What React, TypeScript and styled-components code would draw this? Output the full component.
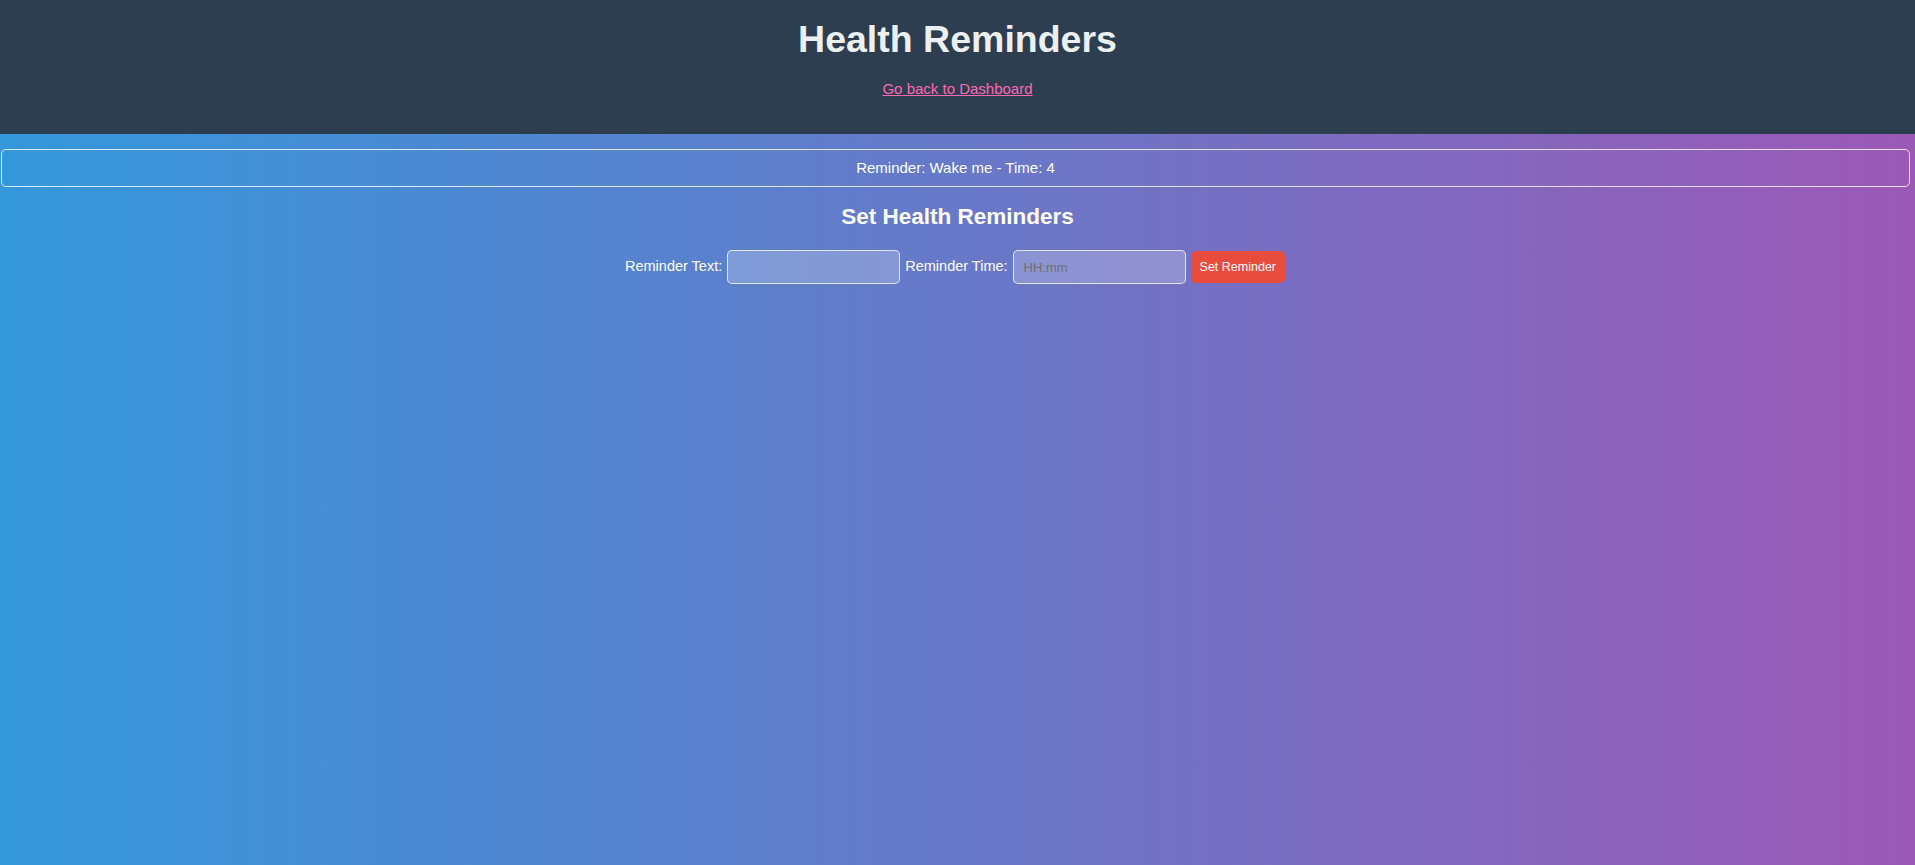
import React, { useState } from "react";
import styled, { createGlobalStyle } from "styled-components";

const GlobalStyle = createGlobalStyle`
  html, body {
    margin: 0;
    padding: 0;
  }

  body {
    min-height: 100vh;
    font-family: "Liberation Sans", Arial, sans-serif;
    background: linear-gradient(to right, #3498db, #9b59b6);
    color: #fff;
  }
`;

const Page = styled.div`
  min-height: 100vh;
  display: flex;
  flex-direction: column;
`;

const Header = styled.header`
  background-color: #2c3e50;
  padding: 18px 0 36px;
  text-align: center;
`;

const Title = styled.h1`
  margin: 0;
  font-size: 37.5px;
  line-height: 42px;
  font-weight: bold;
  color: #ecf0f1;
`;

const BackLink = styled.a`
  display: inline-block;
  margin-top: 20px;
  font-size: 15px;
  line-height: 17px;
  color: #ff69b4;
  text-decoration: underline;
  cursor: pointer;
`;

const ReminderBox = styled.div`
  margin: 15px 5px 0 1px;
  padding: 10px 0 10px;
  border: 1px solid rgba(255, 255, 255, 0.8);
  border-radius: 5px;
  text-align: center;
  font-size: 15px;
  line-height: 16px;
`;

const Section = styled.section`
  display: flex;
  flex-direction: column;
  align-items: center;
`;

const SectionTitle = styled.h2`
  margin: 17px 0 20px;
  font-size: 22.5px;
  line-height: 26px;
  font-weight: bold;
`;

const Form = styled.form`
  display: flex;
  align-items: center;
  justify-content: center;
  gap: 5px;
  margin-left: -5px;
`;

const Label = styled.label`
  font-size: 14.5px;
  line-height: 16px;
  padding-bottom: 2px;
  color: #fff;
`;

const Input = styled.input`
  box-sizing: border-box;
  width: 173px;
  height: 34px;
  padding: 0 10px;
  border: 1px solid rgba(255, 255, 255, 0.75);
  border-radius: 5px;
  background: rgba(255, 255, 255, 0.22);
  color: #fff;
  font-family: "Liberation Sans", Arial, sans-serif;
  font-size: 13px;
  outline: none;

  &::placeholder {
    color: #707070;
  }
`;

const Button = styled.button`
  box-sizing: border-box;
  height: 32px;
  padding: 0 9px;
  border: none;
  border-radius: 5px;
  background-color: #e74c3c;
  color: #fff;
  font-family: "Liberation Sans", Arial, sans-serif;
  font-size: 12.5px;
  cursor: pointer;
`;

interface Reminder {
  text: string;
  time: string;
}

const App: React.FC = () => {
  const [reminders, setReminders] = useState<Reminder[]>([
    { text: "Wake me", time: "4" },
  ]);
  const [text, setText] = useState("");
  const [time, setTime] = useState("");

  const handleSubmit = (event: React.FormEvent<HTMLFormElement>) => {
    event.preventDefault();
    if (!text || !time) return;
    setReminders((prev) => [...prev, { text, time }]);
    setText("");
    setTime("");
  };

  return (
    <Page>
      <GlobalStyle />
      <Header>
        <Title>Health Reminders</Title>
        <BackLink href="#">Go back to Dashboard</BackLink>
      </Header>
      {reminders.map((reminder, index) => (
        <ReminderBox key={index}>
          Reminder: {reminder.text} - Time: {reminder.time}
        </ReminderBox>
      ))}
      <Section>
        <SectionTitle>Set Health Reminders</SectionTitle>
        <Form onSubmit={handleSubmit}>
          <Label htmlFor="reminder-text">Reminder Text:</Label>
          <Input
            id="reminder-text"
            type="text"
            value={text}
            onChange={(e) => setText(e.target.value)}
          />
          <Label htmlFor="reminder-time">Reminder Time:</Label>
          <Input
            id="reminder-time"
            type="text"
            placeholder="HH:mm"
            value={time}
            onChange={(e) => setTime(e.target.value)}
          />
          <Button type="submit">Set Reminder</Button>
        </Form>
      </Section>
    </Page>
  );
};

export default App;
